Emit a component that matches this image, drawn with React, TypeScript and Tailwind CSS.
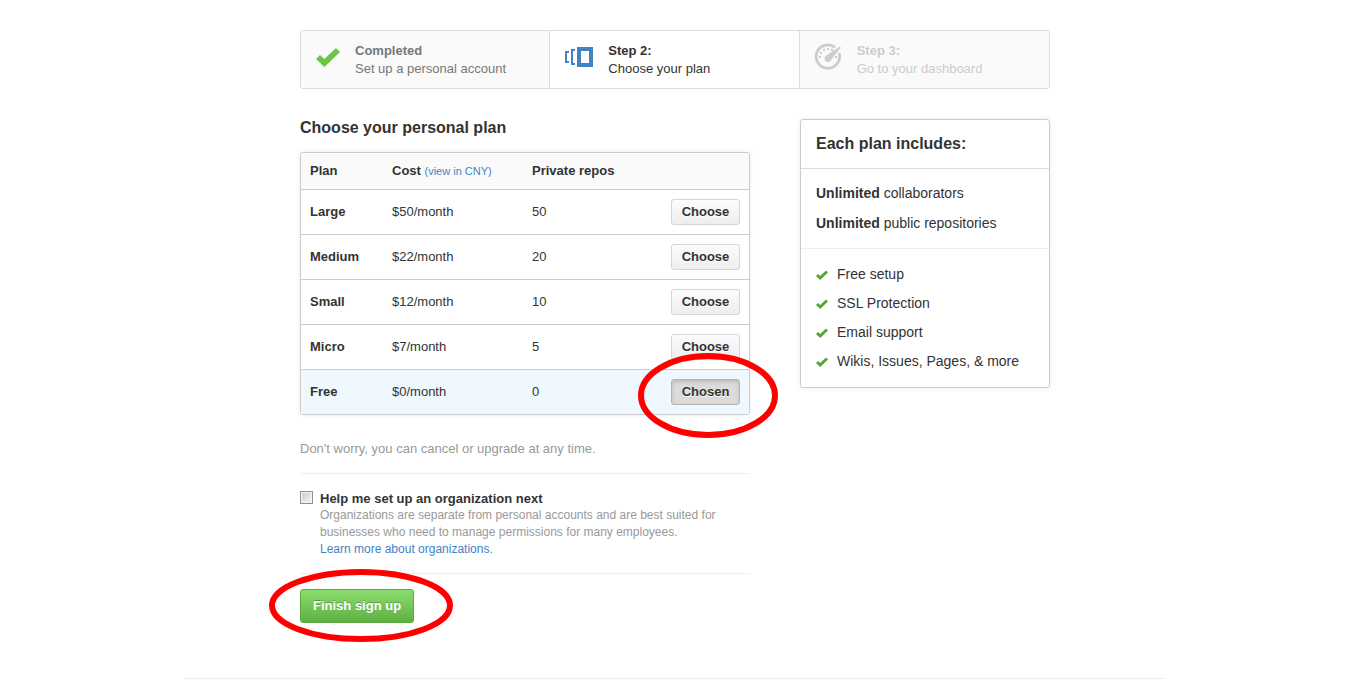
import React from "react";

const plans = [
  { name: "Large", cost: "$50/month", repos: "50", chosen: false },
  { name: "Medium", cost: "$22/month", repos: "20", chosen: false },
  { name: "Small", cost: "$12/month", repos: "10", chosen: false },
  { name: "Micro", cost: "$7/month", repos: "5", chosen: false },
  { name: "Free", cost: "$0/month", repos: "0", chosen: true },
];

const features = ["Free setup", "SSL Protection", "Email support", "Wikis, Issues, Pages, & more"];

function Check({ className }: { className: string }) {
  return (
    <svg viewBox="0 3 12 10" className={className} fill="currentColor" aria-hidden="true">
      <path d="M12 5.500l-7.800 7.500L0 9l2-2 2.200 2L10 3.500z" />
    </svg>
  );
}

function PlansIcon() {
  return (
    <svg viewBox="0 0 28 22" className="h-[22px] w-7" fill="currentColor" aria-hidden="true">
      <path d="M0 5h4v2H2v8h2v2H0zM6 3h4v2H8v12h2v2H6zM12 1h16v20H12zM16 5v12h8V5z" fillRule="evenodd" />
    </svg>
  );
}

function DashboardIcon() {
  return (
    <svg viewBox="0 0 28 28" className="size-7" fill="none" aria-hidden="true">
      <path d="M21 4.300A11.700 11.700 0 1 0 25 10" stroke="currentColor" strokeWidth="2.800" />
      <path d="M25.600 3.400l1.200 1.200L17.300 16.600A3.500 3.500 0 1 1 13 12.200z" fill="currentColor" />
      <g fill="currentColor">
        <rect x="5" y="13" width="2" height="2" />
        <rect x="6" y="9" width="2" height="2" />
        <rect x="9" y="6" width="2" height="2" />
        <rect x="13" y="5" width="2" height="2" />
        <rect x="17" y="6" width="2" height="2" />
        <rect x="21" y="13" width="2" height="2" />
      </g>
    </svg>
  );
}

export default function App() {
  return (
    <div className="bg-white font-['Liberation_Sans',Arial,sans-serif] text-[13px] text-[#333]">
      <main className="mx-auto max-w-[981px] border-b border-[#eee] pb-[55px] pt-[30px]">
        <div className="mx-auto max-w-[751px] pl-px">
          <ol className="grid grid-cols-3 divide-x divide-[#ddd] overflow-hidden rounded-[3px] border border-[#ddd] leading-[18px]">
            <li className="flex bg-[#fafafa] pb-[10px] pl-[15px] pt-[11px] text-[#777]">
              <Check className="mt-[5px] h-5 w-6 text-[#6cc644]" />
              <div className="ml-[15px]">
                <strong className="block">Completed</strong>
                Set up a personal account
              </div>
            </li>
            <li className="flex pb-[10px] pl-[15px] pt-[11px]">
              <span className="mt-1 text-[#4183c4]"><PlansIcon /></span>
              <div className="ml-[15px]">
                <strong className="block">Step 2:</strong>
                Choose your plan
              </div>
            </li>
            <li className="flex bg-[#fafafa] pb-[10px] pl-[14px] pt-[11px] text-[#ccc]">
              <span className="mt-px"><DashboardIcon /></span>
              <div className="ml-[15px]">
                <strong className="block">Step 3:</strong>
                Go to your dashboard
              </div>
            </li>
          </ol>

          <div className="mt-[30px] flex items-start gap-[50px]">
            <form className="min-w-0 flex-1" onSubmit={(e) => e.preventDefault()}>
              <h1 className="text-base font-bold leading-[18px]">Choose your personal plan</h1>
              <div className="relative mt-[15px]">
                <div className="overflow-hidden rounded-[3px] border border-[#ccc] shadow-[0_0_5px_rgba(0,0,0,0.08)]">
                  <table className="w-full table-fixed border-separate border-spacing-0 text-left">
                    <colgroup>
                      <col className="w-[82px]" />
                      <col className="w-[140px]" />
                      <col className="w-[130px]" />
                      <col />
                    </colgroup>
                    <thead>
                      <tr className="h-9 bg-[#fafafa]">
                        <th className="pl-[9px]">Plan</th>
                        <th className="pl-[9px]">
                          Cost{" "}
                          <a href="#cny" className="text-[11px] font-normal text-[#4183c4]">(view in CNY)</a>
                        </th>
                        <th className="pl-[9px]">Private repos</th>
                        <td />
                      </tr>
                    </thead>
                    <tbody className="[&>tr>*]:border-t [&>tr>*]:border-[#ccc]">
                      {plans.map((p) => (
                        <tr key={p.name} className={p.chosen ? "h-[45px] bg-[#f0f8ff]" : "h-[45px]"}>
                          <th scope="row" className="pb-px pl-[9px]">{p.name}</th>
                          <td className="pb-px pl-[9px]">{p.cost}</td>
                          <td className="pb-px pl-[9px]">{p.repos}</td>
                          <td className="pr-[9px]">
                            <button
                              type="button"
                              className={
                                p.chosen
                                  ? "ml-auto block h-[26px] w-[69px] rounded-[3px] border border-[#b5b5b5] bg-[#dcdcdc] pb-px font-bold shadow-[inset_0_2px_4px_rgba(0,0,0,0.15)] [text-shadow:0_1px_0_rgba(255,255,255,0.9)]"
                                  : "ml-auto block h-[26px] w-[69px] rounded-[3px] border border-[#d5d5d5] bg-linear-to-b from-[#fcfcfc] to-[#eee] pb-px font-bold [text-shadow:0_1px_0_rgba(255,255,255,0.9)]"
                              }
                            >
                              {p.chosen ? "Chosen" : "Choose"}
                            </button>
                          </td>
                        </tr>
                      ))}
                    </tbody>
                  </table>
                </div>
                <svg viewBox="0 0 140 85" className="pointer-events-none absolute -bottom-[23px] -right-[28px] h-[85px] w-[140px]" fill="none" aria-hidden="true">
                  <ellipse cx="70" cy="42.500" rx="67" ry="39.500" stroke="#f00" strokeWidth="6" />
                </svg>
              </div>
              <p className="mt-[25px] leading-[18px] text-[#999]">Don't worry, you can cancel or upgrade at any time.</p>
              <div className="mt-[15px] flex items-start border-y border-[#eee] pb-[15px] pt-4">
                <input
                  id="organization"
                  type="checkbox"
                  className="mt-px size-[13px] shrink-0 appearance-none border border-[#8e8f8f] bg-linear-to-br from-[#c6cad0] to-[#f6f6f6] shadow-[inset_0_0_0_1px_#f4f4f4]"
                />
                <div className="ml-[7px] text-xs text-[#999]">
                  <label htmlFor="organization" className="block text-[13px] font-bold leading-[17px] text-[#333]">Help me set up an organization next</label>
                  <p className="leading-[17px]">
                    Organizations are separate from personal accounts and are best suited for businesses who need to manage permissions for many employees.{" "}
                    <a href="#organizations" className="block text-[#4183c4]">Learn more about organizations.</a>
                  </p>
                </div>
              </div>
              <div className="relative mt-[15px] w-fit">
                <button type="submit" className="block h-[34px] rounded-[3px] border border-[#5ca941] bg-linear-to-b from-[#8add6d] to-[#60b044] px-3 font-bold text-white [text-shadow:0_-1px_0_rgba(0,0,0,0.25)]">
                  Finish sign up
                </button>
                <svg viewBox="0 0 184 73" className="pointer-events-none absolute -left-[31px] -top-5 h-[73px] w-[184px] max-w-none" fill="none" aria-hidden="true">
                  <ellipse cx="92" cy="36.500" rx="89" ry="33.500" stroke="#f00" strokeWidth="6" />
                </svg>
              </div>
            </form>

            <aside className="w-[250px] rounded-[3px] border border-[#ccc] text-sm shadow-[0_0_5px_rgba(0,0,0,0.08)]">
              <h2 className="border-b border-[#ddd] px-[15px] py-[14px] text-base font-bold leading-5">Each plan includes:</h2>
              <ul className="border-b border-[#eee] px-[15px] pb-[10px] pt-[9px] leading-[30px]">
                <li><strong>Unlimited</strong> collaborators</li>
                <li><strong>Unlimited</strong> public repositories</li>
              </ul>
              <ul className="px-[15px] pb-[11px] pt-[11px] leading-[29px]">
                {features.map((f) => (
                  <li key={f} className="flex items-center gap-[9px]">
                    <Check className="h-[10px] w-3 text-[#55a532]" />
                    {f}
                  </li>
                ))}
              </ul>
            </aside>
          </div>
        </div>
      </main>
    </div>
  );
}
